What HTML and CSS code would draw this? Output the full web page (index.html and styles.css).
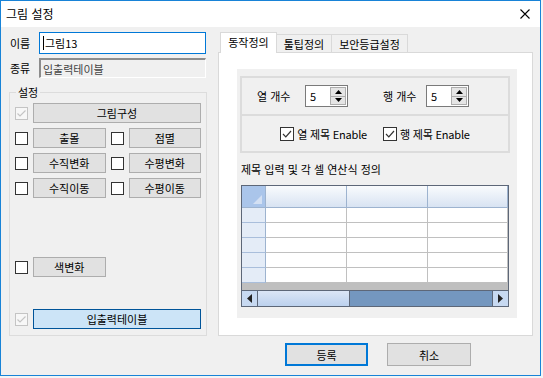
FILE: index.html
```html
<!DOCTYPE html>
<html lang="ko">
<head>
    <meta charset="UTF-8">
    <title>그림 설정</title>
    <link rel="stylesheet" href="styles.css">
</head>
<body>

    <div class="window">
        <!-- Title bar -->
        <div class="titlebar">
            <span class="title">그림 설정</span>
            <svg class="close" width="10" height="10" viewBox="0 0 10 10">
                <path d="M0.5 0.5 L9.5 9.5 M9.5 0.5 L0.5 9.5" stroke="#000" stroke-width="1.1" fill="none"/>
            </svg>
        </div>

        <div class="main">
            <!-- Left side -->
            <div class="left">
                <div class="field">
                    <span class="label">이름</span>
                    <div class="input focused"><span class="caret"></span>그림13</div>
                </div>
                <div class="field second">
                    <span class="label">종류</span>
                    <div class="input readonly">입출력테이블</div>
                </div>

                <div class="group">
                    <span class="group-title">설정</span>

                    <div class="row">
                        <span class="chk disabled"><svg width="11" height="11" viewBox="0 0 11 11"><path d="M1.5 5.5 L4 8 L9.5 2.5" stroke="#c4c4c4" stroke-width="1.2" fill="none"/></svg></span>
                        <span class="btn">그림구성</span>
                    </div>
                    <div class="row">
                        <div class="cell"><span class="chk"></span><span class="btn">출몰</span></div>
                        <div class="cell"><span class="chk"></span><span class="btn">점멸</span></div>
                    </div>
                    <div class="row">
                        <div class="cell"><span class="chk"></span><span class="btn">수직변화</span></div>
                        <div class="cell"><span class="chk"></span><span class="btn">수평변화</span></div>
                    </div>
                    <div class="row">
                        <div class="cell"><span class="chk"></span><span class="btn">수직이동</span></div>
                        <div class="cell"><span class="chk"></span><span class="btn">수평이동</span></div>
                    </div>
                    <div class="row color-row">
                        <div class="cell"><span class="chk"></span><span class="btn">색변화</span></div>
                        <div class="cell"></div>
                    </div>
                    <div class="row table-row">
                        <span class="chk disabled"><svg width="11" height="11" viewBox="0 0 11 11"><path d="M1.5 5.5 L4 8 L9.5 2.5" stroke="#c4c4c4" stroke-width="1.2" fill="none"/></svg></span>
                        <span class="btn selected">입출력테이블</span>
                    </div>
                </div>
            </div>

            <!-- Right side: tabs -->
            <div class="right">
                <div class="tabs">
                    <span class="tab active">동작정의</span>
                    <span class="tab t2">툴팁정의</span>
                    <span class="tab t3">보안등급설정</span>
                </div>
                <div class="tab-page">
                    <div class="panel">
                        <div class="frame-row counts">
                            <span class="count-label">열 개수</span>
                            <div class="spin">
                                <span class="spin-val">5</span>
                                <div class="spin-btns">
                                    <span class="spin-btn"><svg width="7" height="4" viewBox="0 0 7 4"><path d="M0 4 L3.5 0 L7 4 Z" fill="#000"/></svg></span>
                                    <span class="spin-btn"><svg width="7" height="4" viewBox="0 0 7 4"><path d="M0 0 L3.5 4 L7 0 Z" fill="#000"/></svg></span>
                                </div>
                            </div>
                            <span class="count-label second">행 개수</span>
                            <div class="spin">
                                <span class="spin-val">5</span>
                                <div class="spin-btns">
                                    <span class="spin-btn"><svg width="7" height="4" viewBox="0 0 7 4"><path d="M0 4 L3.5 0 L7 4 Z" fill="#000"/></svg></span>
                                    <span class="spin-btn"><svg width="7" height="4" viewBox="0 0 7 4"><path d="M0 0 L3.5 4 L7 0 Z" fill="#000"/></svg></span>
                                </div>
                            </div>
                        </div>
                        <div class="frame-row enables">
                            <label class="check-item">
                                <span class="chk big"><svg width="12" height="12" viewBox="0 0 12 12"><path d="M2 6 L4.8 8.8 L10 3" stroke="#333" stroke-width="1.2" fill="none"/></svg></span>
                                열 제목 Enable
                            </label>
                            <label class="check-item">
                                <span class="chk big"><svg width="12" height="12" viewBox="0 0 12 12"><path d="M2 6 L4.8 8.8 L10 3" stroke="#333" stroke-width="1.2" fill="none"/></svg></span>
                                행 제목 Enable
                            </label>
                        </div>

                        <div class="grid-title">제목 입력 및 각 셀 연산식 정의</div>

                        <div class="grid">
                            <div class="grid-table">
                                <div class="corner"></div><div class="hcell"></div><div class="hcell"></div><div class="hcell"></div>
                                <div class="rcell"></div><div class="cell-b"></div><div class="cell-b"></div><div class="cell-b"></div>
                                <div class="rcell"></div><div class="cell-b"></div><div class="cell-b"></div><div class="cell-b"></div>
                                <div class="rcell"></div><div class="cell-b"></div><div class="cell-b"></div><div class="cell-b"></div>
                                <div class="rcell"></div><div class="cell-b"></div><div class="cell-b"></div><div class="cell-b"></div>
                                <div class="rcell"></div><div class="cell-b"></div><div class="cell-b"></div><div class="cell-b"></div>
                            </div>
                            <div class="grid-empty"></div>
                            <div class="hscroll">
                                <span class="sb-btn"><svg width="5" height="9" viewBox="0 0 5 9"><path d="M5 0 L0 4.5 L5 9 Z" fill="#222"/></svg></span>
                                <span class="sb-thumb"></span>
                                <span class="sb-track"></span>
                                <span class="sb-btn"><svg width="5" height="9" viewBox="0 0 5 9"><path d="M0 0 L5 4.5 L0 9 Z" fill="#222"/></svg></span>
                            </div>
                        </div>
                    </div>
                </div>
            </div>
        </div>

        <!-- Bottom buttons -->
        <div class="footer">
            <button class="dlg-btn default">등록</button>
            <button class="dlg-btn cancel">취소</button>
        </div>
    </div>

</body>
</html>
```

FILE: styles.css
```css
/* Reset */
* {
    margin: 0;
    padding: 0;
    box-sizing: border-box;
}

body {
    background: #f4f4f4;
    font-family: "Noto Sans CJK KR", "Noto Sans", sans-serif;
    font-size: 11px;
    line-height: 14px;
    color: #000;
}

/* Dialog window */
.window {
    width: 541px;
    height: 376px;
    border: 1px solid #1883d7;
    background: #f0f0f0;
}

.titlebar {
    height: 26px;
    background: #fff;
    display: flex;
    align-items: center;
    justify-content: space-between;
    padding: 0 10px 0 5px;
}

.title {
    font-size: 12px;
}

.main {
    display: flex;
    gap: 11px;
    height: 309px;
    padding: 5px 0 0 8px;
}

/* Left column */
.left {
    width: 198px;
    display: flex;
    flex-direction: column;
}

.field {
    display: flex;
    align-items: center;
}

.field.second {
    margin-top: 4px;
}

.label {
    width: 30px;
    padding-left: 1px;
}

.input {
    width: 167px;
    height: 22px;
    background: #fff;
    border: 1px solid #0078d7;
    display: flex;
    align-items: center;
    padding-left: 3px;
    font-size: 11px;
}

.caret {
    width: 1px;
    height: 14px;
    background: #000;
    margin-right: 1px;
}

.input.readonly {
    height: 20px;
    background: #f0f0f0;
    border-top: 2px solid #8c8c8c;
    border-left: 2px solid #8c8c8c;
    border-right: 1px solid #fff;
    border-bottom: 1px solid #fff;
    padding-left: 2px;
    color: #444;
}

/* Settings group */
.group {
    position: relative;
    margin-top: 14px;
    height: 244px;
    border: 1px solid #dcdcdc;
    padding: 10px 5px 0;
    display: flex;
    flex-direction: column;
    gap: 5px;
}

.group-title {
    position: absolute;
    top: -8px;
    left: 6px;
    padding: 0 2px;
    background: #f0f0f0;
}

.row {
    display: flex;
    align-items: center;
    gap: 5px;
    height: 20px;
}

.row.color-row {
    margin-top: 54px;
}

.row.table-row {
    margin-top: 27px;
}

.cell {
    flex: 1;
    display: flex;
    align-items: center;
    gap: 5px;
    height: 20px;
}

.chk {
    width: 13px;
    height: 13px;
    flex: none;
    border: 1px solid #333;
    background: #fff;
    display: flex;
    align-items: center;
    justify-content: center;
}

.chk.disabled {
    border-color: #c4c4c4;
    background: #f7f7f7;
}

.chk.big {
    width: 14px;
    height: 14px;
}

.btn {
    flex: 1;
    height: 20px;
    background: #e1e1e1;
    border: 1px solid #adadad;
    display: flex;
    align-items: center;
    justify-content: center;
}

.btn.selected {
    background: #cce4f7;
    border: 1px solid #005499;
}

/* Right column: tab control */
.right {
    width: 315px;
    display: flex;
    flex-direction: column;
}

.tabs {
    height: 20px;
    display: flex;
    align-items: flex-end;
    padding-left: 2px;
}

.tab {
    height: 18px;
    border: 1px solid #d9d9d9;
    border-bottom: none;
    background: #f0f0f0;
    display: flex;
    align-items: center;
    justify-content: center;
    margin-left: -1px;
}

.tab.active {
    position: relative;
    z-index: 1;
    width: 57px;
    height: 21px;
    margin: 0 0 -1px 0;
    background: #fff;
    align-items: flex-start;
    padding-top: 2px;
}

.tab.t2 {
    width: 56px;
}

.tab.t3 {
    width: 77px;
}

.tab-page {
    height: 284px;
    background: #fff;
    border: 1px solid #d9d9d9;
    padding: 16px 15px 17px 18px;
}

.panel {
    width: 280px;
    height: 249px;
    background: #f0f0f0;
    padding: 7px 7px 0 3px;
}

.frame-row {
    border: 2px solid #dcdcdc;
    display: flex;
    align-items: center;
}

.frame-row.counts {
    height: 40px;
    padding-left: 15px;
}

.frame-row.enables {
    height: 37px;
    border-top: none;
    justify-content: center;
    gap: 16px;
}

.count-label {
    width: 48px;
}

.count-label.second {
    width: 43px;
    margin-left: 35px;
}

.spin {
    width: 43px;
    height: 22px;
    border: 1px solid #7a7a7a;
    background: #fff;
    display: flex;
}

.spin-val {
    flex: 1;
    padding: 3px 0 0 4px;
}

.spin-btns {
    width: 17px;
    display: flex;
    flex-direction: column;
    padding: 1px 1px 1px 0;
    gap: 0;
}

.spin-btn {
    flex: 1;
    background: #e5e5e5;
    border: 1px solid #adadad;
    display: flex;
    align-items: center;
    justify-content: center;
}

.spin-btn + .spin-btn {
    border-top: none;
}

.check-item {
    display: flex;
    align-items: center;
    gap: 3px;
    letter-spacing: -0.2px;
}

.grid-title {
    margin: 9px 0 0 1px;
}

/* Data grid */
.grid {
    margin: 9px 0 0 1px;
    width: 268px;
    height: 122px;
    border: 1px solid #5d6778;
    background: #fff;
    display: flex;
    flex-direction: column;
}

.grid-table {
    display: grid;
    grid-template-columns: 24px 81px 81px 1fr;
    grid-template-rows: 22px repeat(5, 15px);
}

.corner {
    position: relative;
    background: #aac5ea;
    border-right: 1px solid #9db3cf;
    border-bottom: 1px solid #9db3cf;
}

.corner::after {
    content: "";
    position: absolute;
    right: 3px;
    bottom: 3px;
    border-style: solid;
    border-width: 0 0 9px 9px;
    border-color: transparent transparent #d3e0f3 transparent;
}

.hcell {
    background: linear-gradient(#f9fbfd, #d8e3f2);
    border-right: 1px solid #9db3cf;
    border-bottom: 1px solid #9db3cf;
}

.rcell {
    background: #e4ecf7;
    border-right: 1px solid #9db3cf;
    border-bottom: 1px solid #a9bedb;
}

.cell-b {
    background: #fff;
    border-right: 1px solid #c0c0c0;
    border-bottom: 1px solid #c0c0c0;
}

.grid-empty {
    height: 7px;
    background: #bfbfbf;
}

.hscroll {
    height: 16px;
    display: flex;
    background: #7497bf;
    border-top: 1px solid #5d6778;
}

.sb-btn {
    width: 16px;
    background: #c7d9f1;
    border-right: 1px solid #5d6778;
    display: flex;
    align-items: center;
    justify-content: center;
}

.sb-btn:last-child {
    border-right: none;
    border-left: 1px solid #5d6778;
}

.sb-thumb {
    width: 92px;
    background: linear-gradient(#dbe6f6, #bcd1ee);
    border-right: 1px solid #5d6778;
}

.sb-track {
    flex: 1;
}

/* Footer buttons */
.footer {
    display: flex;
    margin-top: 7px;
    padding-left: 284px;
}

.dlg-btn {
    height: 23px;
    font-family: inherit;
    font-size: 11px;
    background: #e1e1e1;
    color: #000;
}

.dlg-btn.default {
    width: 83px;
    border: 2px solid #0078d7;
}

.dlg-btn.cancel {
    width: 84px;
    margin-left: 19px;
    border: 1px solid #adadad;
}
```
